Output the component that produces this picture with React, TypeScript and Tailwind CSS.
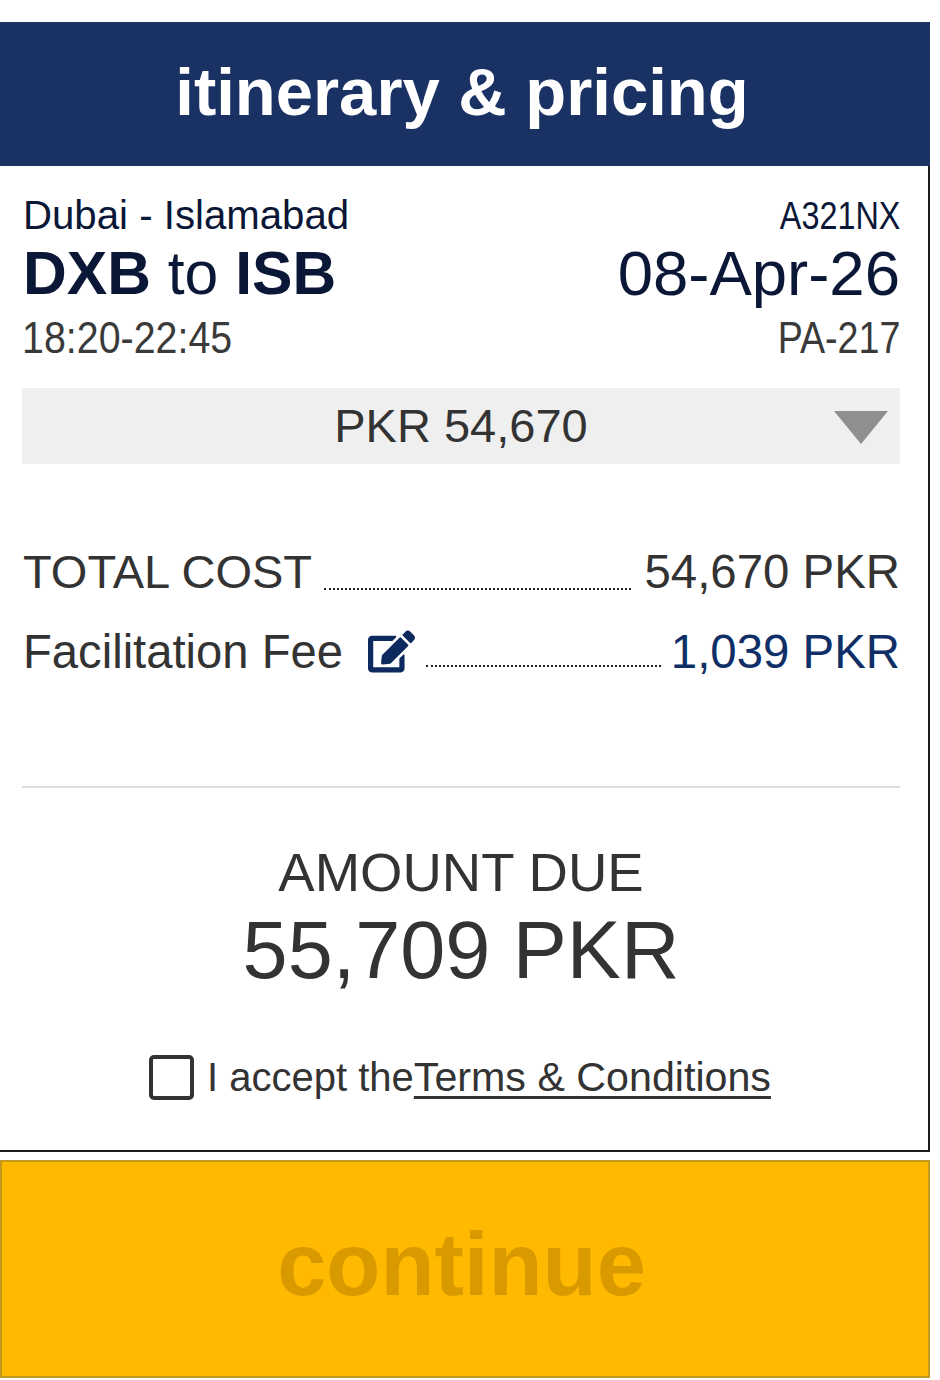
import React from "react";
import { FaEdit } from "react-icons/fa";

const App: React.FC = () => {
  return (
    <div className="w-[940px] h-[1380px] bg-white pt-[22px] overflow-hidden text-[#333] font-['Liberation_Sans',Arial,sans-serif]">
      <div className="w-[930px]">
        <div className="h-[144px] bg-[#1a3263] flex items-center justify-center pr-[6px]">
          <h1 className="text-[67px] leading-none font-bold text-white -mt-[5px]">itinerary &amp; pricing</h1>
        </div>

        <div className="border-r-2 border-b-2 border-[#1c1c1c] h-[986px] pl-[22px] pr-[28px] pt-[28px]">
          <div className="flex justify-between text-[#0a1736]">
            <div>
              <div className="text-[40.2px] leading-[44px] h-[44px] ml-px">Dubai - Islamabad</div>
              <div className="text-[60.6px] leading-[70px] h-[70px] ml-px">
                <b className="font-bold">DXB</b> to <b className="font-bold">ISB</b>
              </div>
              <div className="text-[44px] leading-[60px] h-[56px] text-[#3a3a3a] origin-left scale-x-[0.895] whitespace-nowrap">18:20-22:45</div>
            </div>
            <div className="text-right">
              <div className="text-[39px] leading-[44px] h-[44px] origin-right scale-x-[0.83] whitespace-nowrap">A321NX</div>
              <div className="text-[63.5px] leading-[70px] h-[70px] whitespace-nowrap">08-Apr-26</div>
              <div className="text-[44px] leading-[60px] h-[56px] text-[#3a3a3a] origin-right scale-x-[0.855] whitespace-nowrap">PA-217</div>
            </div>
          </div>

          <div className="mt-[24px] h-[76px] bg-[#efefef] relative flex items-center justify-center">
            <span className="text-[47px] leading-none -mt-[2px]">PKR 54,670</span>
            <svg className="absolute right-[12px] top-[23px]" width="54" height="33" viewBox="0 0 54 33">
              <polygon points="0,0 54,0 27,33" fill="#8f8f8f" />
            </svg>
          </div>

          <div className="mt-[80px] flex items-end h-[56px]">
            <span className="text-[47px] leading-[56px] whitespace-nowrap ml-px">TOTAL COST</span>
            <div className="flex-1 border-b-2 border-dotted border-[#222] ml-[12px] mr-[13px] mb-[10px]" />
            <span className="text-[47.4px] leading-[56px] whitespace-nowrap">54,670 PKR</span>
          </div>
          <div className="mt-[24px] flex items-end h-[56px]">
            <span className="text-[47.2px] leading-[56px] whitespace-nowrap ml-px">Facilitation Fee</span>
            <FaEdit className="ml-[25px] mb-[5px] text-[#0d2a5e] shrink-0" size={47} />
            <div className="flex-1 border-b-2 border-dotted border-[#222] ml-[11px] mr-[10px] mb-[13px]" />
            <span className="text-[47.4px] leading-[56px] text-[#0f2f66] whitespace-nowrap">1,039 PKR</span>
          </div>

          <div className="mt-[106px] border-t-2 border-[#dddddd]" />

          <div className="mt-[55px] text-center text-[54.5px] leading-[60px]">AMOUNT DUE</div>
          <div className="mt-[3px] text-center text-[81px] leading-[88px]">55,709 PKR</div>

          <div className="mt-[60px] flex items-center justify-center h-[46px] pr-[2px]">
            <input type="checkbox" className="appearance-none w-[45px] h-[45px] border-[4px] border-[#333] rounded-[5px] bg-white shrink-0" />
            <span className="ml-[13px] text-[40px] leading-[46px] whitespace-nowrap">I accept the</span>
            <a href="#" className="text-[41.2px] leading-[46px] underline underline-offset-[5px] decoration-[3px] whitespace-nowrap">Terms &amp; Conditions</a>
          </div>
        </div>

        <button className="block w-full mt-[8px] h-[218px] bg-[#ffb900] border-2 border-[#c2981d] pr-[7px] pb-[8px] text-[88.5px] leading-none font-bold text-[#d99a00]">
          continue
        </button>
      </div>
    </div>
  );
};

export default App;
